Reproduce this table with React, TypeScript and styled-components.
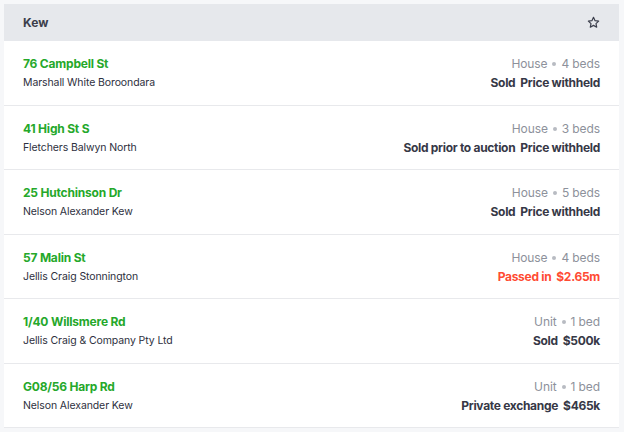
import React from "react";
import styled, { createGlobalStyle } from "styled-components";

const Global = createGlobalStyle`
  html, body { margin: 0; padding: 0; background: #f6f7f9; }
  body { font-family: Inter, "Noto Sans", sans-serif; -webkit-font-smoothing: antialiased; }
`;

const Page = styled.div`
  padding: 4px 4px 0 4px;
  width: 616px;
`;

const Card = styled.div`
  background: #ffffff;
  width: 615px;
`;

const Header = styled.div`
  display: flex;
  align-items: center;
  justify-content: space-between;
  height: 37px;
  padding: 0 19px;
  background: #e6e8ec;
`;

const HeaderTitle = styled.span`
  font-size: 12px;
  font-weight: 700;
  color: #3b3e4b;
`;

const StarButton = styled.span`
  display: flex;
  align-items: center;
  color: #3b3e4b;
`;

const Row = styled.div`
  display: flex;
  justify-content: space-between;
  padding: 14px 19px 12.5px 19px;
  border-bottom: 1px solid #e8e9ec;
`;

const Col = styled.div<{ $right?: boolean }>`
  display: flex;
  flex-direction: column;
  gap: 1px;
  align-items: ${(p) => (p.$right ? "flex-end" : "flex-start")};
`;

const Address = styled.span`
  font-size: 12px;
  line-height: 18px;
  font-weight: 700;
  color: #25a82a;
  letter-spacing: -0.2px;
`;

const Agency = styled.span`
  font-size: 10.5px;
  line-height: 18px;
  color: #2e3040;
  letter-spacing: -0.1px;
`;

const Meta = styled.span`
  font-size: 12px;
  line-height: 18px;
  color: #8d919b;
  display: flex;
  align-items: center;
  gap: 5px;
  letter-spacing: -0.1px;
`;

const Dot = styled.span`
  width: 4px;
  height: 4px;
  border-radius: 50%;
  background: #b8bbc2;
`;

const Price = styled.span<{ $red?: boolean }>`
  display: flex;
  gap: 5px;
  font-size: 12px;
  line-height: 18px;
  font-weight: 700;
  letter-spacing: -0.3px;
  color: ${(p) => (p.$red ? "#ff4b33" : "#363846")};
`;

type Item = { addr: string; agency: string; type: string; beds: string; status: string; amount: string; red?: boolean };

const items: Item[] = [
  { addr: "76 Campbell St", agency: "Marshall White Boroondara", type: "House", beds: "4 beds", status: "Sold", amount: "Price withheld" },
  { addr: "41 High St S", agency: "Fletchers Balwyn North", type: "House", beds: "3 beds", status: "Sold prior to auction", amount: "Price withheld" },
  { addr: "25 Hutchinson Dr", agency: "Nelson Alexander Kew", type: "House", beds: "5 beds", status: "Sold", amount: "Price withheld" },
  { addr: "57 Malin St", agency: "Jellis Craig Stonnington", type: "House", beds: "4 beds", status: "Passed in", amount: "$2.65m", red: true },
  { addr: "1/40 Willsmere Rd", agency: "Jellis Craig & Company Pty Ltd", type: "Unit", beds: "1 bed", status: "Sold", amount: "$500k" },
  { addr: "G08/56 Harp Rd", agency: "Nelson Alexander Kew", type: "Unit", beds: "1 bed", status: "Private exchange", amount: "$465k" },
];

const Star = () => (
  <svg width="13" height="13" viewBox="0 0 24 24" fill="none" stroke="currentColor" strokeWidth="2.2" strokeLinejoin="round">
    <path d="M12 2.5l2.9 6.1 6.6.8-4.9 4.6 1.3 6.6L12 17.3l-5.9 3.3 1.3-6.6-4.9-4.6 6.6-.8z" />
  </svg>
);

export default function App() {
  return (
    <Page>
      <Global />
      <Card>
        <Header>
          <HeaderTitle>Kew</HeaderTitle>
          <StarButton>
            <Star />
          </StarButton>
        </Header>
        {items.map((it) => (
          <Row key={it.addr}>
            <Col>
              <Address>{it.addr}</Address>
              <Agency>{it.agency}</Agency>
            </Col>
            <Col $right>
              <Meta>
                {it.type}
                <Dot />
                {it.beds}
              </Meta>
              <Price $red={it.red}>
                <span>{it.status}</span>
                <span>{it.amount}</span>
              </Price>
            </Col>
          </Row>
        ))}
      </Card>
    </Page>
  );
}
